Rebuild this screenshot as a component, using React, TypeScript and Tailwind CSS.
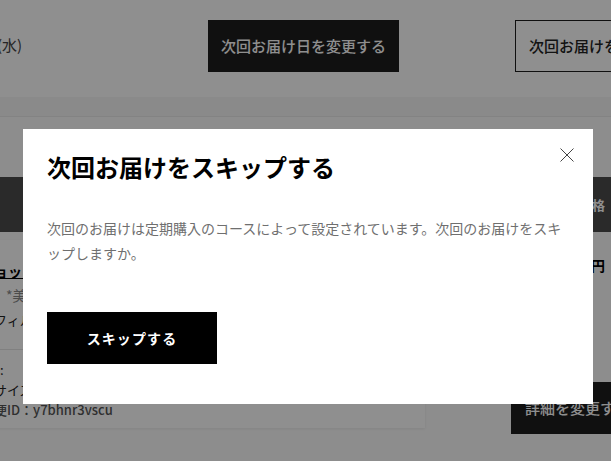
import React from 'react';

const font = { fontFamily: '"Noto Sans CJK JP", "Noto Sans", sans-serif' };

const CloseIcon: React.FC = () => (
  <svg width="14" height="14" viewBox="0 0 14 14" fill="none" stroke="#444" strokeWidth="1">
    <path d="M0.5 0.5 L13.5 13.5 M13.5 0.5 L0.5 13.5" />
  </svg>
);

const SkipModal: React.FC = () => (
  <div className="absolute inset-0 bg-black/[0.44]">
    <div className="ml-[23px] mt-[129px] w-[570px] bg-white px-6 pt-5 pb-[40px] relative">
      <button className="absolute right-[19px] top-[19px]">
        <CloseIcon />
      </button>
      <h2 className="text-2xl leading-9 font-bold text-black">次回お届けをスキップする</h2>
      <p className="mt-[31px] text-sm leading-[25px] text-[#6f6f6f]">
        次回のお届けは定期購入のコースによって設定されています。次回のお届けをスキップしますか。
      </p>
      <button className="mt-[46px] w-[170px] h-[52px] bg-black text-white text-sm font-bold tracking-[0.08em]">
        スキップする
      </button>
    </div>
  </div>
);

export default function App() {
  return (
    <div className="relative w-[611px] h-[461px] overflow-hidden bg-white" style={font}>
      {/* delivery schedule row */}
      <div className="h-[97px] flex items-start pt-[20px] whitespace-nowrap">
        <span className="-ml-[3px] mt-[14px] w-[23px] shrink-0 text-[15px] text-[#444]">(水)</span>
        <button className="ml-[188px] shrink-0 w-[191px] h-[52px] bg-[#1d1d1d] text-white text-[15px] font-medium">
          次回お届け日を変更する
        </button>
        <button className="ml-[116px] shrink-0 w-[200px] h-[52px] border border-[#1d1d1d] text-[#222] text-[15px] font-medium text-left pl-[13px]">
          次回お届けをスキップする
        </button>
      </div>
      <div className="h-[20px] bg-[#f7f7f7] border-b border-[#eaeaea]" />

      {/* order details */}
      <div className="bg-[#fcfcfc] h-[344px] pt-[60px]">
        <div className="h-[55px] bg-[#4b4b4b] flex items-center justify-end pr-[6px]">
          <span className="text-white text-[13px] font-bold">単価価格</span>
        </div>
        <div className="flex">
          <div className="-ml-[6px] mt-[8px] w-[431px] h-[188px] bg-white shadow-[0_1px_3px_rgba(0,0,0,0.08)] pt-[20px] whitespace-nowrap">
            <div className="text-[14px] leading-[22px] font-bold text-black underline">ョッピングバッグ</div>
            <div className="mt-[2px] pl-[12px] text-[14px] leading-[22px] text-[#888]">*美容液</div>
            <div className="mt-[3px] text-[13px] leading-[22px] text-[#222]">フィルム</div>
            <div className="mt-[18px] border-t border-[#e5e5e5] pt-[10px] text-[13px] leading-[20px] text-[#222]">
              <div className="pl-[6px]">:</div>
              <div>サイズ</div>
              <div className="text-[#555] font-medium">便ID：y7bhnr3vscu</div>
            </div>
          </div>
          <div className="flex-1 flex flex-col items-end">
            <span className="mt-[23px] mr-[6px] text-[14px] font-bold text-black">円</span>
            <button className="mt-[106px] w-[100px] h-[52px] bg-[#1d1d1d] text-white text-[15px] font-medium text-left pl-[14px] whitespace-nowrap overflow-hidden">
              詳細を変更する
            </button>
          </div>
        </div>
      </div>

      <SkipModal />
    </div>
  );
}
